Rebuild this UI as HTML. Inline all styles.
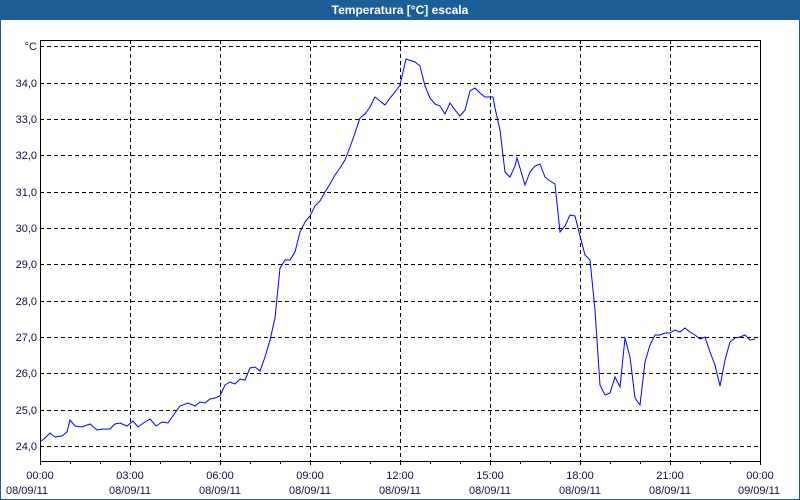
<!DOCTYPE html>
<html><head><meta charset="utf-8"><style>
body{margin:0;width:800px;height:500px;background:#fff;overflow:hidden;font-family:"Liberation Sans",sans-serif}
.t{position:absolute;left:0;top:0;width:800px;height:20px;background:#1c5f97;color:#fff;font-weight:bold;font-size:12px;text-align:center;line-height:20px}
</style></head><body>
<div class="t">Temperatura [°C] escala</div>
<svg width="800" height="500" style="position:absolute;left:0;top:0">
<rect x="0" y="20" width="1" height="480" fill="#1c5f97"/>
<rect x="799" y="20" width="1" height="480" fill="#1c5f97"/>
<rect x="0" y="499" width="800" height="1" fill="#1c5f97"/>
<g stroke="#000" stroke-width="1" stroke-dasharray="4,3" shape-rendering="crispEdges">
<line x1="40" x2="760" y1="46.5" y2="46.5"/><line x1="40" x2="760" y1="83.5" y2="83.5"/><line x1="40" x2="760" y1="119.5" y2="119.5"/><line x1="40" x2="760" y1="155.5" y2="155.5"/><line x1="40" x2="760" y1="192.5" y2="192.5"/><line x1="40" x2="760" y1="228.5" y2="228.5"/><line x1="40" x2="760" y1="264.5" y2="264.5"/><line x1="40" x2="760" y1="301.5" y2="301.5"/><line x1="40" x2="760" y1="337.5" y2="337.5"/><line x1="40" x2="760" y1="373.5" y2="373.5"/><line x1="40" x2="760" y1="410.5" y2="410.5"/><line x1="40" x2="760" y1="446.5" y2="446.5"/>
<line y1="40" y2="461" x1="130.5" x2="130.5"/><line y1="40" y2="461" x1="220.5" x2="220.5"/><line y1="40" y2="461" x1="310.5" x2="310.5"/><line y1="40" y2="461" x1="400.5" x2="400.5"/><line y1="40" y2="461" x1="490.5" x2="490.5"/><line y1="40" y2="461" x1="580.5" x2="580.5"/><line y1="40" y2="461" x1="670.5" x2="670.5"/>
</g>
<rect x="40.5" y="40.5" width="720" height="421" fill="none" stroke="#000" shape-rendering="crispEdges"/>
<g stroke="#000" shape-rendering="crispEdges">
<path d="M40.5 461v4M70.5 461v3M100.5 461v3M130.5 461v4M160.5 461v3M190.5 461v3M220.5 461v4M250.5 461v3M280.5 461v3M310.5 461v4M340.5 461v3M370.5 461v3M400.5 461v4M430.5 461v3M460.5 461v3M490.5 461v4M520.5 461v3M550.5 461v3M580.5 461v4M610.5 461v3M640.5 461v3M670.5 461v4M700.5 461v3M730.5 461v3M760.5 461v4"/>
</g>
<polyline fill="none" stroke="#0000ee" stroke-width="1" points="40,442 45,438 50,433 55,437 62,436 67,432 70,420 75,426 82,427 90,424 97,430 103,429 110,429 115,424 120,423 127,426 133,421 138,427 145,422 150,419 156,426 162,422 168,423 175,413 180,406 188,403 195,406 200,402 205,403 210,399 215,398 220,396 225,385 230,382 235,384 240,379 245,380 250,368 255,367 260,371 265,357 270,340 275,318 280,268 285,260 290,260 295,252 300,232 305,222 310,216 315,206 320,201 325,192 330,184 335,175 340,168 345,160 350,147 355,133 360,118 365,114 370,107 375,97 380,101 385,105 390,98 395,92 400,85 406,59 415,62 420,66 425,86 430,98 435,104 440,106 445,114 450,103 455,110 460,116 465,110 470,91 475,88 480,93 485,97 493,97 495,108 500,130 505,172 510,177 515,166 517,158 520,168 525,185 530,172 535,166 540,164 545,177 550,181 555,184 560,232 565,226 570,215 575,216 580,236 585,255 590,260 595,310 600,385 605,395 610,393 615,377 620,387 625,338 630,357 635,398 640,405 645,362 650,345 655,335 660,335 665,333 670,333 675,330 680,332 685,328 690,332 695,335 700,339 705,337 710,352 715,365 720,386 725,360 730,342 735,338 740,337 745,335 750,340 755,339"/>
<g font-family="Liberation Sans, sans-serif" font-size="11" fill="#101040" text-anchor="end">
<text x="37" y="50">°C</text><text x="37" y="87">34,0</text><text x="37" y="123">33,0</text><text x="37" y="159">32,0</text><text x="37" y="196">31,0</text><text x="37" y="232">30,0</text><text x="37" y="268">29,0</text><text x="37" y="305">28,0</text><text x="37" y="341">27,0</text><text x="37" y="377">26,0</text><text x="37" y="414">25,0</text><text x="37" y="450">24,0</text>
</g>
<g font-family="Liberation Sans, sans-serif" font-size="11" fill="#101040" text-anchor="middle">
<text x="40" y="479">00:00</text><text x="130" y="479">03:00</text><text x="220" y="479">06:00</text><text x="310" y="479">09:00</text><text x="400" y="479">12:00</text><text x="490" y="479">15:00</text><text x="580" y="479">18:00</text><text x="670" y="479">21:00</text><text x="760" y="479">00:00</text>
<text x="27" y="494">08/09/11</text><text x="130" y="494">08/09/11</text><text x="220" y="494">08/09/11</text><text x="310" y="494">08/09/11</text><text x="400" y="494">08/09/11</text><text x="490" y="494">08/09/11</text><text x="580" y="494">08/09/11</text><text x="670" y="494">08/09/11</text><text x="759" y="494">09/09/11</text>
</g>
</svg>
</body></html>
